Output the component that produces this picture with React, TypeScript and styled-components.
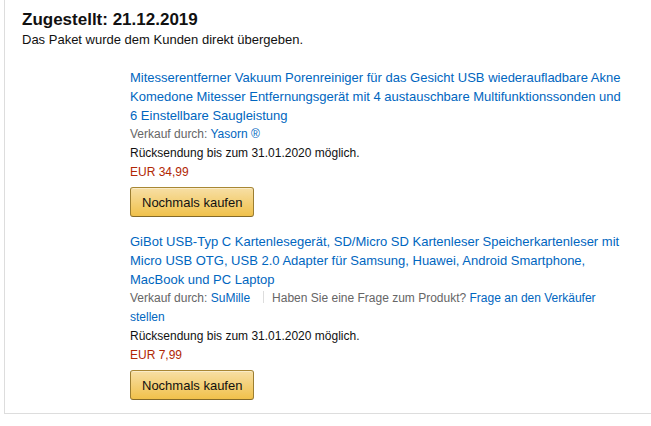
import React from 'react';
import styled, { createGlobalStyle } from 'styled-components';

const GlobalStyle = createGlobalStyle`
    body {
        margin: 0;
        background: #fff;
        font-family: 'Liberation Sans', Arial, sans-serif;
        font-size: 13px;
        line-height: 19px;
        color: #111;
        overflow: hidden;
    }
`;

const Box = styled.div`
    margin-left: 4px;
    width: 680px;
    border: 1px solid #ddd;
    border-top: none;
    padding: 9px 0 13px 17px;
    box-sizing: border-box;
`;

const Heading = styled.div`
    font-size: 17px;
    font-weight: 700;
    line-height: 21px;
    color: #111;
`;

const SubText = styled.div`
    color: #111;
`;

const ItemList = styled.div`
    display: flex;
    flex-direction: column;
    gap: 15px;
    margin-top: 19px;
    padding-left: 108px;
`;

const Item = styled.div`
    display: flex;
    flex-direction: column;
    width: 500px;
`;

const Link = styled.a`
    color: #0066c0;
    text-decoration: none;
    cursor: pointer;
`;

const Line = styled.div<{ $tone?: 'secondary' | 'price' }>`
    font-size: 12px;
    line-height: 19px;
    color: ${({ $tone }) =>
        $tone === 'secondary' ? '#666' : $tone === 'price' ? '#b12704' : '#111'};
`;

const Divider = styled.span`
    display: inline-block;
    width: 1px;
    height: 12px;
    background: #ddd;
    margin: 0 8px 0 13px;
    vertical-align: -1px;
`;

const BuyButton = styled.button`
    align-self: flex-start;
    margin-top: 5px;
    height: 30px;
    padding: 0 11px;
    font-family: inherit;
    font-size: 13px;
    color: #111;
    border: 1px solid;
    border-color: #a88734 #9c7e31 #846a29;
    border-radius: 3px;
    background: linear-gradient(to bottom, #f7dfa5, #f0c14b);
    box-shadow: 0 1px 0 rgba(255, 255, 255, 0.4) inset;
    cursor: pointer;
`;

type Product = {
    title: string;
    seller: string;
    question?: boolean;
    returnDate: string;
    price: string;
};

const products: Product[] = [
    {
        title: 'Mitesserentferner Vakuum Porenreiniger für das Gesicht USB wiederaufladbare Akne Komedone Mitesser Entfernungsgerät mit 4 austauschbare Multifunktionssonden und 6 Einstellbare Saugleistung',
        seller: 'Yasorn ®',
        returnDate: '31.01.2020',
        price: 'EUR 34,99',
    },
    {
        title: 'GiBot USB-Typ C Kartenlesegerät, SD/Micro SD Kartenleser Speicherkartenleser mit Micro USB OTG, USB 2.0 Adapter für Samsung, Huawei, Android Smartphone, MacBook und PC Laptop',
        seller: 'SuMille',
        question: true,
        returnDate: '31.01.2020',
        price: 'EUR 7,99',
    },
];

const App = () => {
    return (
        <>
            <GlobalStyle />
            <Box>
                <Heading>Zugestellt: 21.12.2019</Heading>
                <SubText>Das Paket wurde dem Kunden direkt übergeben.</SubText>
                <ItemList>
                    {products.map((p) => (
                        <Item key={p.seller}>
                            <Link>{p.title}</Link>
                            <Line $tone="secondary">
                                Verkauf durch: <Link>{p.seller}</Link>
                                {p.question && (
                                    <>
                                        <Divider />
                                        Haben Sie eine Frage zum Produkt?{' '}
                                        <Link>Frage an den Verkäufer stellen</Link>
                                    </>
                                )}
                            </Line>
                            <Line>Rücksendung bis zum {p.returnDate} möglich.</Line>
                            <Line $tone="price">{p.price}</Line>
                            <BuyButton>Nochmals kaufen</BuyButton>
                        </Item>
                    ))}
                </ItemList>
            </Box>
        </>
    );
};

export default App;
